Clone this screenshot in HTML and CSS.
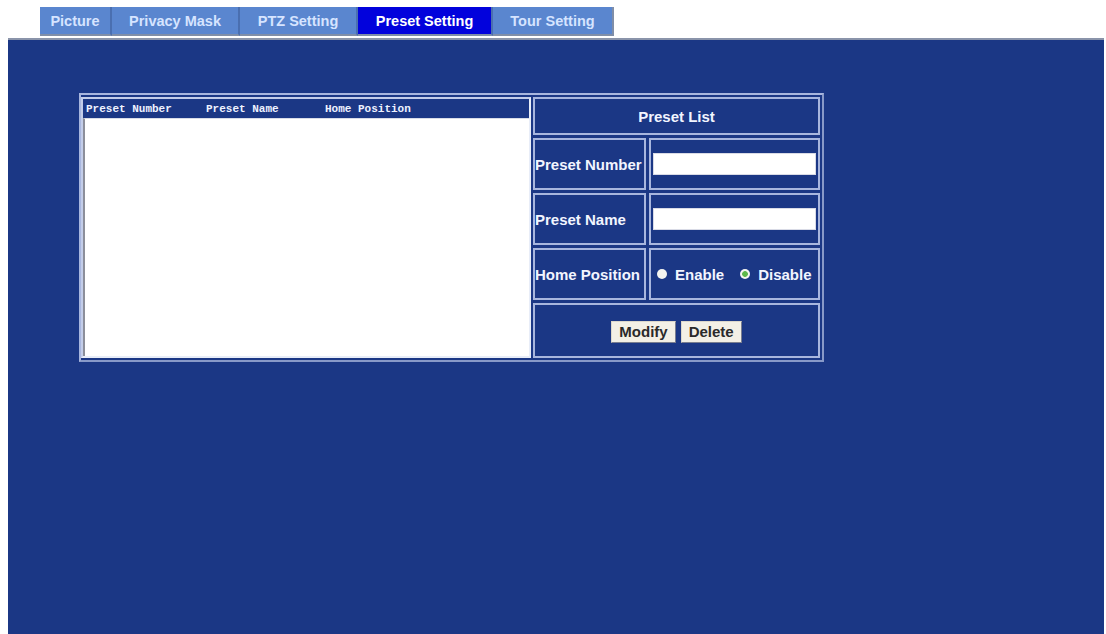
FILE: index.html
```html
<!DOCTYPE html>
<html lang="en">
<head>
    <meta charset="UTF-8">
    <title>Preset Setting</title>
    <link rel="stylesheet" href="styles.css">
</head>
<body>
    <div class="tabs">
        <div class="tab tab-picture">Picture</div>
        <div class="tab tab-privacy">Privacy Mask</div>
        <div class="tab tab-ptz">PTZ Setting</div>
        <div class="tab tab-preset active">Preset Setting</div>
        <div class="tab tab-tour">Tour Setting</div>
    </div>

    <div class="panel">
        <div class="preset-box">
            <div class="preset-list">
                <div class="list-head">
                    <span class="col-num">Preset Number</span>
                    <span class="col-name">Preset Name</span>
                    <span>Home Position</span>
                </div>
                <div class="list-body"></div>
            </div>

            <div class="preset-form">
                <div class="cell title">Preset List</div>
                <div class="row">
                    <div class="cell label">Preset Number</div>
                    <div class="cell value"><input type="text" class="field"></div>
                </div>
                <div class="row">
                    <div class="cell label">Preset Name</div>
                    <div class="cell value"><input type="text" class="field"></div>
                </div>
                <div class="row">
                    <div class="cell label">Home Position</div>
                    <div class="cell value radios">
                        <span class="radio"></span><span>Enable</span>
                        <span class="radio on"></span><span>Disable</span>
                    </div>
                </div>
                <div class="cell actions">
                    <button class="btn">Modify</button>
                    <button class="btn">Delete</button>
                </div>
            </div>
        </div>
    </div>
</body>
</html>
```

FILE: styles.css
```css
body {
    margin: 0;
    background-color: #fff;
    font-family: "Liberation Sans", Arial, sans-serif;
    height: 634px;
    overflow: hidden;
}

/* tab strip */
.tabs {
    display: flex;
    margin-left: 40px;
    padding-top: 7px;
    height: 29px;
}
.tab {
    display: flex;
    align-items: center;
    justify-content: center;
    background-color: #5a86cf;
    color: #d6e4ff;
    font-size: 14.5px;
    font-weight: bold;
    border-right: 2px solid #4a6fb0;
    border-bottom: 2px solid #7f8ea8;
    box-sizing: border-box;
}
.tab.active {
    background-color: #0202dc;
    color: #fff;
}
.tab-picture { width: 72px; }
.tab-privacy { width: 128px; }
.tab-ptz { width: 118px; }
.tab-preset { width: 135px; }
.tab-tour { width: 121px; border-right: 2px solid #7f8ea8; }

/* main blue area */
.panel {
    margin: 2px 2px 0 8px;
    height: 596px;
    background-color: #1b3785;
    border-top: 2px solid #8a94aa;
    box-sizing: border-box;
    padding: 53px 0 0 71px;
}

.preset-box {
    display: flex;
    gap: 2px;
    width: 745px;
    height: 269px;
    box-sizing: border-box;
    padding: 2px 2px 2px 0;
    border: 2px solid #a8b6de;
    border-right-color: #8899c8;
    border-bottom-color: #8899c8;
}

/* left list box */
.preset-list {
    width: 450px;
    box-sizing: border-box;
    display: flex;
    flex-direction: column;
    border: 2px solid #c3cde9;
    border-right-color: #e8edf8;
    border-bottom-color: #e8edf8;
}
.list-head {
    height: 19px;
    display: flex;
    align-items: center;
    padding-left: 3px;
    color: #eef2ff;
    font-family: "Liberation Mono", "Courier New", monospace;
    font-size: 11px;
    font-weight: bold;
    white-space: pre;
}
.col-num { width: 120px; }
.col-name { width: 119px; }
.list-body {
    flex: 1;
    background-color: #fff;
    border-left: 2px solid #8c8f9a;
    border-top: 1px solid #d8dce8;
}

/* right form */
.preset-form {
    flex: 1;
    display: flex;
    flex-direction: column;
    gap: 3px;
}
.cell {
    border: 2px solid #a8b6de;
    box-sizing: border-box;
    color: #f2f5ff;
    font-size: 15px;
    font-weight: bold;
    display: flex;
    align-items: center;
}
.title {
    height: 38px;
    justify-content: center;
}
.row {
    display: flex;
    gap: 3px;
    height: 52px;
}
.label {
    width: 113px;
    padding-left: 0;
    white-space: nowrap;
    overflow: hidden;
    flex-shrink: 0;
}
.value {
    flex: 1;
    padding: 0 2px;
}
.field {
    width: 100%;
    height: 22px;
    box-sizing: border-box;
    border: 1px solid #d9dbe6;
    background-color: #fff;
    margin: 0;
}

.radios {
    gap: 8px;
    padding-left: 6px;
    white-space: nowrap;
    overflow: hidden;
}
.radio {
    width: 10px;
    height: 10px;
    border-radius: 50%;
    background-color: #f4f4f0;
    flex-shrink: 0;
}
.radio.on {
    background: radial-gradient(circle, #5cb84a 0 2.5px, #f4f4f0 3.2px);
    margin-left: 8px;
}

.actions {
    flex: 1;
    justify-content: center;
    gap: 5px;
}
.btn {
    font-family: "Liberation Sans", Arial, sans-serif;
    font-size: 15px;
    font-weight: bold;
    color: #2a2a2a;
    background-color: #f3f0e6;
    border: 1px solid #dcd8cc;
    border-right-color: #7a7e90;
    border-bottom-color: #7a7e90;
    height: 22px;
    padding: 0 7px;
    margin-top: 2px;
}
```
